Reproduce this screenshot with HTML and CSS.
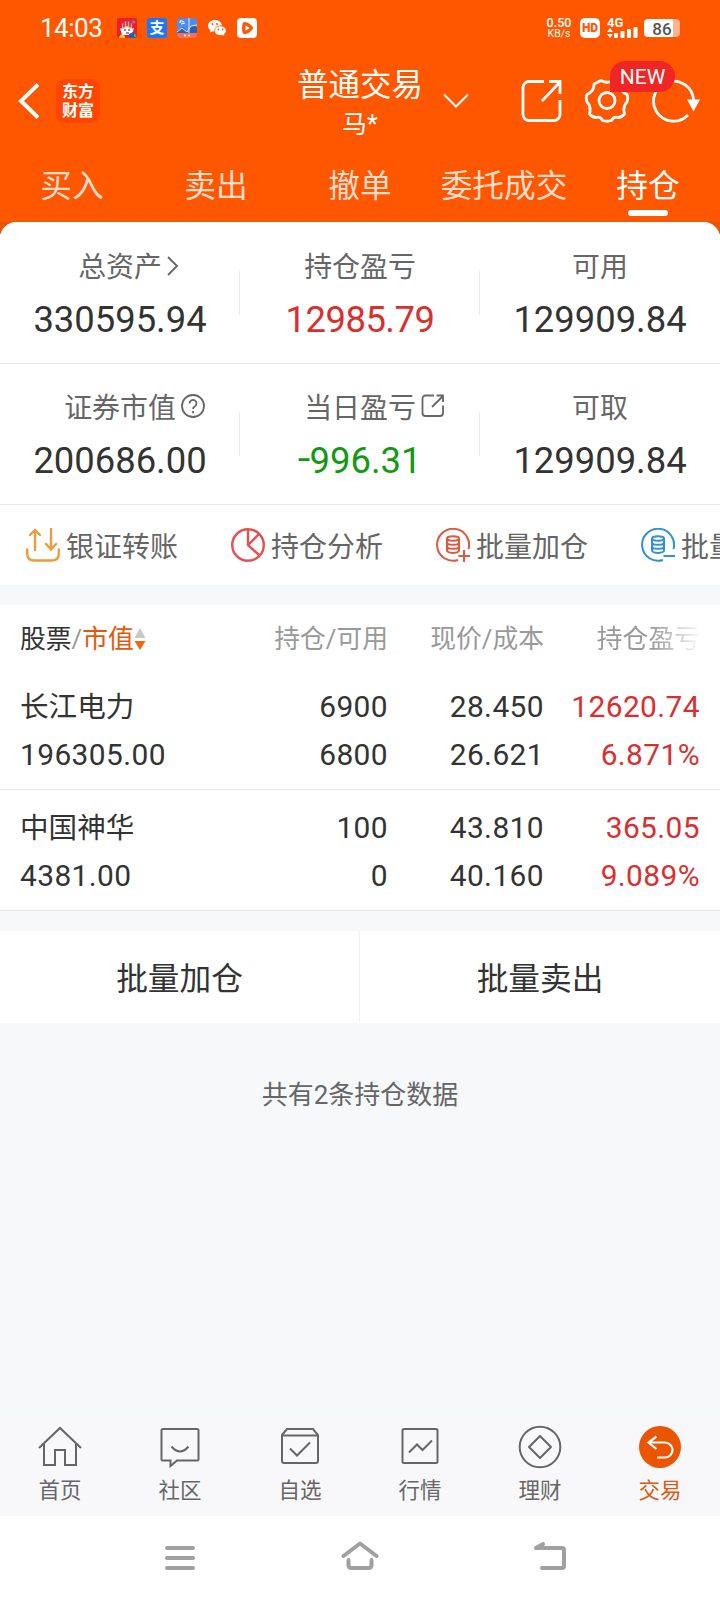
FILE: index.html
```html
<!DOCTYPE html>
<html lang="zh-CN">
<head>
    <meta charset="UTF-8">
    <meta name="viewport" content="width=device-width, initial-scale=1.0">
    <title>持仓</title>
    <link rel="stylesheet" href="styles.css">
</head>
<body>
    <header class="top">
        <div class="status">
            <span class="time">14:03</span>
            <div class="apps">
                <svg width="20" height="20" viewBox="0 0 20 20">
                    <rect width="20" height="20" rx="2" fill="#ee1c2e"/>
                    <path d="M5 11V6q5-6 10 0v5" fill="#f7a9a5"/>
                    <path d="M7 4v5M10 3v5M13 4v5" stroke="#c51e2c" stroke-width="1.4"/>
                    <path d="M3 10l4 1 3-2 3 2 4-1-2 7H5z" fill="#fff"/>
                    <path d="M7 12h2M11 12h2M9 15h3" stroke="#222" stroke-width="1.2"/>
                    <path d="M2 20q1-6 6-2v2z" fill="#ffc928"/>
                    <path d="M12 20v-4l4-2 2 2v4z" fill="#1b5fc4"/>
                    <path d="M17 16h2v3h-2z" fill="#35b26b"/>
                    <circle cx="16.500" cy="4" r="1.700" fill="#8e76b8"/>
                </svg>
                <span class="alipay">支</span>
                <svg width="20" height="20" viewBox="0 0 20 20">
                    <rect width="20" height="20" rx="4" fill="#4b8df2"/>
                    <path d="M0 13l6-4 4 4 4-6 6 2v6H0z" fill="#2862b8"/>
                    <path d="M0 15h20v1a4 4 0 0 1-4 4H4a4 4 0 0 1-4-4z" fill="#f2705c"/>
                    <path d="M0 14l5-4 5 4 4-6 6-1M12 0v15" fill="none" stroke="#dcecff" stroke-width="1"/>
                    <path d="M3 5q0-3 2-2t2 1M4 6l4-1" fill="none" stroke="#fff" stroke-width="1.2"/>
                    <path d="M7 17.500h2M11 17.500h2" stroke="#fff" stroke-width="1.500"/>
                </svg>
                <svg width="20" height="20" viewBox="0 0 20 20">
                    <path d="M8 2C4 2 1 4.500 1 7.800c0 1.900 1 3.400 2.400 4.400L3 14.500l2.500-1.300c.8.2 1.600.3 2.500.3 0-4 3-6 7-6C14.500 4 11.500 2 8 2z" fill="#fff"/>
                    <path d="M13.500 8c-3.300 0-6 2-6 4.800s2.700 4.700 6 4.700c.7 0 1.400-.1 2-.3l2 1-.4-1.800c1.300-.9 2.100-2.200 2.100-3.600C19.200 10 16.800 8 13.500 8z" fill="#fff" stroke="#ff5600" stroke-width=".7"/>
                    <g fill="#ff5600"><circle cx="5.500" cy="6" r="1"/><circle cx="10" cy="6" r="1"/><circle cx="11.500" cy="11.500" r=".9"/><circle cx="15.500" cy="11.500" r=".9"/></g>
                </svg>
                <svg width="20" height="20" viewBox="0 0 20 20">
                    <rect width="20" height="20" rx="4" fill="#fff"/>
                    <path d="M6 4.500q4-2 8.500 3 3 2.500 0 5-4.500 5-8.500 3-2-5.500 0-11z" fill="#ff5600"/>
                    <path d="M8.500 7.200v5.600l4.200-2.800z" fill="#fff"/>
                </svg>
            </div>
            <div class="signal">
                <div class="speed"><b>0.50</b><span>KB/s</span></div>
                <span class="hd">HD</span>
                <div class="net">
                    <b>4G</b>
                    <svg width="31" height="12" viewBox="0 0 31 12" fill="#fff">
                        <path d="M0 5l3-4 3 4zM0 7l3 4 3-4z"/>
                        <rect x="7" y="6" width="4" height="5" rx="1"/>
                        <rect x="13.500" y="4" width="4" height="7" rx="1"/>
                        <rect x="20" y="2" width="4" height="9" rx="1"/>
                        <rect x="26.500" y="0" width="4" height="11" rx="1"/>
                    </svg>
                </div>
                <div class="battery">86</div>
            </div>
        </div>

        <div class="titlebar">
            <div class="left">
                <svg width="22" height="36" viewBox="0 0 22 36" fill="none" stroke="#fff" stroke-width="4"><path d="M21 1.500L4 18l17 16.500"/></svg>
                <div class="logo">东方<br>财富</div>
            </div>
            <div class="title">
                <h1>普通交易</h1>
                <p>马*</p>
                <svg class="down" width="26" height="16" viewBox="0 0 26 16" fill="none" stroke="#fff" stroke-width="2"><path d="M1 1.500l12 12 12-12"/></svg>
            </div>
            <div class="tools">
                <svg width="42" height="44" viewBox="0 0 42 44" fill="none" stroke="#fff" stroke-width="2.800">
                    <path d="M24 2.500H9a6 6 0 0 0-6 6v27a6 6 0 0 0 6 6h25a6 6 0 0 0 6-6V21M22 22L39 4M29 2.500h11V15"/>
                </svg>
                <svg width="46" height="46" viewBox="0 0 46 46" fill="none" stroke="#fff" stroke-width="2.800" stroke-linejoin="round">
                    <path d="M17 2.500Q23 6 29 2.500L36 6Q35.500 13 43 16.500Q44.500 19.500 43 24Q38.500 28 40.500 36Q37.500 39.500 34 39.500Q29.500 38 27.500 42.500Q23 44 18.500 42.500Q16.500 38 12 39.500Q8.500 39.500 5.500 36Q7.500 28 3 24Q1.500 19.500 3 16.500Q10.500 13 10 6z"/>
                    <circle cx="23" cy="22.500" r="8"/>
                </svg>
                <svg width="48" height="46" viewBox="0 0 48 46">
                    <path d="M36 37A20 20 0 1 1 41.500 22" fill="none" stroke="#fff" stroke-width="2.800"/>
                    <path d="M35 21.500h13l-6.500 12z" fill="#fff"/>
                </svg>
                <span class="new">NEW</span>
            </div>
        </div>

        <nav class="tabs">
            <a>买入</a>
            <a>卖出</a>
            <a>撤单</a>
            <a>委托成交</a>
            <a class="active">持仓</a>
        </nav>
    </header>

    <div class="panel-wrap">
        <section class="panel">
            <div class="assets">
                <div class="cell">
                    <span class="label">总资产<svg class="hint arrow" width="12" height="20" viewBox="0 0 12 20" fill="none" stroke="#666" stroke-width="1.800"><path d="M1 1l9 9-9 9"/></svg></span>
                    <span class="value">330595.94</span>
                </div>
                <div class="cell">
                    <span class="label">持仓盈亏</span>
                    <span class="value red">12985.79</span>
                </div>
                <div class="cell">
                    <span class="label">可用</span>
                    <span class="value">129909.84</span>
                </div>
            </div>
            <div class="assets">
                <div class="cell">
                    <span class="label">证券市值<svg class="hint" width="24" height="24" viewBox="0 0 24 24" fill="none" stroke="#666" stroke-width="1.800"><circle cx="12" cy="12" r="11"/><path d="M8.500 9.500a3.500 3.500 0 1 1 5.500 2.800q-2 1.200-2 2.700"/><path d="M12 17v2.200"/></svg></span>
                    <span class="value">200686.00</span>
                </div>
                <div class="cell">
                    <span class="label">当日盈亏<svg class="hint" width="24" height="24" viewBox="0 0 24 24" fill="none" stroke="#666" stroke-width="1.800"><path d="M13 1.500H4.500a3 3 0 0 0-3 3V19a3 3 0 0 0 3 3H19a3 3 0 0 0 3-3v-7.500M11 13L22 2M15.500 1.500H22V8"/></svg></span>
                    <span class="value green"><i>-</i>996.31</span>
                </div>
                <div class="cell">
                    <span class="label">可取</span>
                    <span class="value">129909.84</span>
                </div>
            </div>
            <div class="actions">
                <a>
                    <svg width="34" height="34" viewBox="0 0 34 34" fill="none" stroke="#e99d3b" stroke-width="2.400" stroke-linecap="round"><path d="M9 22V2M4 7l5-5 5 5M25 1v20M20 16l5 5.500 5-5.500M1.200 21.500v4q0 7 7 7h17.600q7 0 7-7v-4"/></svg>
                    银证转账
                </a>
                <a>
                    <svg width="34" height="34" viewBox="0 0 34 34" fill="none" stroke="#e35050" stroke-width="2.400"><circle cx="17" cy="17" r="15.800"/><path d="M17 1v16l11 10M17 17L28 6"/></svg>
                    持仓分析
                </a>
                <a>
                    <svg width="34" height="34" viewBox="0 0 34 34" fill="none" stroke="#e0563f" stroke-width="2">
                        <path d="M22 32A16 16 0 1 1 32.500 21M28 22v12M22.500 28h11.500"/>
                        <ellipse cx="17" cy="10.500" rx="6" ry="2.300"/><path d="M11 10.500v12q0 2 6 2.500 6-.5 6-2.500v-12M11 14.500q0 2.300 6 2.300t6-2.300M11 18.500q0 2.300 6 2.300t6-2.300"/>
                    </svg>
                    批量加仓
                </a>
                <a>
                    <svg width="34" height="34" viewBox="0 0 34 34" fill="none" stroke="#3291d4" stroke-width="2">
                        <path d="M22 32A16 16 0 1 1 32.500 21M22.500 28h11.500"/>
                        <ellipse cx="17" cy="10.500" rx="6" ry="2.300"/><path d="M11 10.500v12q0 2 6 2.500 6-.5 6-2.500v-12M11 14.500q0 2.300 6 2.300t6-2.300M11 18.500q0 2.300 6 2.300t6-2.300"/>
                    </svg>
                    批量卖出
                </a>
            </div>
        </section>
    </div>

    <section class="stocks">
        <div class="row head">
            <div><span class="dark">股票</span>/<span class="sort">市值</span><svg width="12" height="24" viewBox="0 0 12 24"><path d="M6 1l5.500 10H.5z" fill="#c8c8c8"/><path d="M6 23L.5 14h11z" fill="#f26414"/></svg></div>
            <div>持仓/可用</div>
            <div>现价/成本</div>
            <div class="fade">持仓盈亏</div>
        </div>
        <div class="row">
            <div><b class="name">长江电力</b><br>196305.00</div>
            <div>6900<br>6800</div>
            <div>28.450<br>26.621</div>
            <div class="red">12620.74<br>6.871%</div>
        </div>
        <div class="row">
            <div><b class="name">中国神华</b><br>4381.00</div>
            <div>100<br>0</div>
            <div>43.810<br>40.160</div>
            <div class="red">365.05<br>9.089%</div>
        </div>
    </section>

    <div class="batch">
        <a>批量加仓</a>
        <a>批量卖出</a>
    </div>
    <p class="total">共有2条持仓数据</p>

    <nav class="bottom">
        <a>
            <svg width="44" height="44" viewBox="0 0 44 44"><path d="M1 23L22 3l21 20M6 19v21h11V25h10v15h11V19"/></svg>
            首页
        </a>
        <a>
            <svg width="44" height="44" viewBox="0 0 44 44"><path d="M5 4h34a1.500 1.500 0 0 1 1.500 1.500V34a1.500 1.500 0 0 1-1.500 1.500H19L12.500 41v-5.500H5A1.500 1.500 0 0 1 3.500 34V5.500A1.500 1.500 0 0 1 5 4zM13.500 21.500q8.500 10 17 0"/></svg>
            社区
        </a>
        <a>
            <svg width="44" height="44" viewBox="0 0 44 44"><path d="M4 10l5-6h26l5 6v26a2 2 0 0 1-2 2H6a2 2 0 0 1-2-2zM4 10.500h36M12 23.500l7 7L32 17.500"/></svg>
            自选
        </a>
        <a>
            <svg width="44" height="44" viewBox="0 0 44 44"><rect x="4.500" y="4" width="35" height="34" rx="1.500"/><path d="M11 27.500l8-8 5.500 5.500L34 15.500"/></svg>
            行情
        </a>
        <a>
            <svg width="44" height="44" viewBox="0 0 44 44"><circle cx="22" cy="22" r="20.300"/><path d="M22 11l11 11-11 11-11-11z" stroke-linejoin="round"/></svg>
            理财
        </a>
        <a class="on">
            <svg width="44" height="44" viewBox="0 0 44 44"><circle cx="22" cy="22" r="21" class="disc"/><path d="M18.500 11.500l-8 6L18.500 24M11 17.500h16a7.500 7.500 0 0 1 0 15h-8"/></svg>
            交易
        </a>
    </nav>

    <footer class="system">
        <svg width="60" height="40" viewBox="0 0 60 40"><path d="M17 10h26M17 20h26M17 30h26"/></svg>
        <svg width="60" height="40" viewBox="0 0 60 40"><path d="M13.500 18L30 5.500 46.500 18M18.500 22v5q0 3 3 3h17q3 0 3-3v-5"/></svg>
        <svg width="60" height="40" viewBox="0 0 60 40"><path d="M33 6l-7 4h26q2 0 2 2v16q0 2-2 2H32"/></svg>
    </footer>
</body>
</html>
```
FILE: styles.css
```css
* {
    box-sizing: border-box;
    margin: 0;
    padding: 0;
}

body {
    display: flex;
    flex-direction: column;
    width: 720px;
    height: 1600px;
    overflow: hidden;
    background-color: #f7f8fa;
    color: #333;
    font-family: Roboto, "Noto Sans CJK SC", sans-serif;
}

svg {
    display: block;
    flex-shrink: 0;
}

.red {
    color: #d9302f;
}

.green {
    color: #119a11;
}

/* header */
.top {
    height: 222px;
    background-color: #ff5600;
    color: #fff;
}

.status {
    display: flex;
    align-items: center;
    height: 56px;
    padding-left: 40px;
    padding-right: 40px;
}

.time {
    width: 77px;
    font-size: 26px;
    letter-spacing: -0.5px;
}

.apps {
    display: flex;
    gap: 10px;
}

.alipay {
    width: 20px;
    height: 20px;
    border-radius: 3px;
    background-color: #1677ff;
    font-size: 15px;
    font-weight: bold;
    line-height: 20px;
    text-align: center;
}

.signal {
    display: flex;
    align-items: center;
    margin-left: auto;
}

.speed {
    display: flex;
    flex-direction: column;
    align-items: center;
    width: 28px;
    margin-right: 7px;
    font-size: 10.5px;
    line-height: 10px;
}

.speed b {
    font-size: 12.5px;
    font-weight: 500;
    line-height: 12px;
}

.hd {
    width: 20px;
    height: 20px;
    margin-right: 7px;
    border-radius: 5px;
    background-color: #fff;
    color: #ff5600;
    font-size: 12px;
    font-weight: 900;
    line-height: 20px;
    text-align: center;
}

.net {
    width: 31px;
    margin-right: 6px;
}

.net b {
    display: block;
    height: 9px;
    font-size: 13px;
    font-weight: 700;
    line-height: 10px;
}

.battery {
    width: 36px;
    height: 18px;
    border-radius: 4px;
    background: linear-gradient(to right, #fff 29px, #ffb48c 29px);
    color: #555;
    font-size: 17px;
    font-weight: 500;
    line-height: 20px;
    text-align: center;
}

.titlebar {
    display: grid;
    grid-template-columns: 1fr auto 1fr;
    height: 90px;
}

.left {
    display: flex;
    align-items: center;
    gap: 17px;
    padding-left: 17px;
}

.logo {
    width: 44px;
    height: 44px;
    padding-top: 3px;
    border-radius: 9px;
    background-color: #ff4600;
    font-size: 16px;
    font-weight: bold;
    line-height: 19px;
    text-align: center;
}

.title {
    position: relative;
    padding-top: 9px;
    text-align: center;
}

.title h1 {
    font-size: 31.5px;
    font-weight: normal;
    line-height: 42px;
}

.title p {
    font-size: 25px;
    line-height: 36px;
}

.down {
    position: absolute;
    top: 37px;
    right: -46px;
}

.tools {
    position: relative;
    display: flex;
    align-items: center;
    justify-content: flex-end;
    gap: 22px;
    padding-right: 20px;
}

.new {
    position: absolute;
    top: 5px;
    right: 45px;
    width: 65px;
    height: 31px;
    border-radius: 16px 16px 16px 0;
    background-color: #f02525;
    font-size: 21px;
    line-height: 33px;
    text-align: center;
}

.tabs {
    display: grid;
    grid-template-columns: repeat(5, 1fr);
    height: 76px;
}

.tabs a {
    display: flex;
    flex-direction: column;
    align-items: center;
    padding-top: 20px;
    color: #ffddcc;
    font-size: 31.7px;
    line-height: 42px;
}

.tabs .active {
    color: #fff;
}

.tabs .active::after {
    content: "";
    width: 40px;
    height: 6px;
    margin-top: 2px;
    border-radius: 3px;
    background-color: #fff;
}

/* assets */
.panel-wrap {
    background: linear-gradient(#e85604 12px, #fff 12px);
}

.panel {
    overflow: hidden;
    border-radius: 16px 16px 0 0;
    background-color: #fff;
}

.assets {
    display: grid;
    grid-template-columns: repeat(3, 1fr);
    height: 142px;
    padding-top: 1px;
    border-bottom: 1px solid #e9e9e9;
}

.assets + .assets {
    height: 141px;
    padding-top: 0;
}

.cell {
    position: relative;
    display: flex;
    flex-direction: column;
    align-items: center;
    padding-top: 24px;
}

.cell + .cell::before {
    content: "";
    position: absolute;
    top: 48px;
    left: -1px;
    width: 1px;
    height: 44px;
    background-color: #e9e9e9;
}

.label {
    position: relative;
    color: #666;
    font-size: 27.9px;
    line-height: 42px;
}

.hint {
    position: absolute;
    top: 6px;
    left: calc(100% + 5px);
}

.arrow {
    top: 9px;
}

.value {
    margin-top: 10px;
    font-size: 36.4px;
    line-height: 42px;
}

.value i {
    display: inline-block;
    margin-right: 1px;
    font-style: normal;
    transform: translateY(-2px) scaleX(1.25);
}

.value.red {
    letter-spacing: -0.5px;
}

.actions {
    display: flex;
    height: 80px;
}

.actions a {
    display: flex;
    flex-shrink: 0;
    align-items: center;
    gap: 6px;
    width: 205px;
    padding-left: 26px;
    color: #666;
    font-size: 28px;
    white-space: nowrap;
}

/* stock list */
.stocks {
    margin-top: 20px;
    background-color: #fff;
}

.row {
    display: grid;
    grid-template-columns: 207px 161px 156px 156px;
    height: 121px;
    padding: 14px 19px 0 20px;
    border-bottom: 1px solid #e9e9e9;
    font-size: 29.9px;
    letter-spacing: 0.4px;
    line-height: 48px;
    text-align: right;
}

.row div:first-child {
    text-align: left;
}

.name {
    font-size: 28.6px;
    font-weight: normal;
    letter-spacing: 0;
}

.head {
    height: 64px;
    padding-top: 10px;
    border: none;
    color: #999;
    font-size: 25.8px;
    letter-spacing: 0;
}

.head div:first-child {
    display: flex;
    align-items: center;
    height: 48px;
}

.dark {
    color: #333;
}

.sort {
    color: #e2590e;
}

.fade {
    -webkit-mask-image: linear-gradient(to right, #000 108px, transparent 158px);
    mask-image: linear-gradient(to right, #000 108px, transparent 158px);
}

.batch {
    display: grid;
    grid-template-columns: 1fr 1fr;
    height: 92px;
    margin-top: 20px;
    overflow: hidden;
    background-color: #fff;
    font-size: 31.7px;
    line-height: 97px;
    text-align: center;
}

.batch a:first-child {
    border-right: 1px solid #f1f1f3;
}

.total {
    margin-top: 52px;
    color: #666;
    font-size: 26px;
    line-height: 40px;
    text-align: center;
}

/* bottom bars */
.bottom {
    display: grid;
    grid-template-columns: repeat(6, 1fr);
    height: 99px;
    margin-top: auto;
    background-color: #f8f8fb;
}

.bottom a {
    display: flex;
    flex-direction: column;
    align-items: center;
    padding-top: 8px;
    color: #666;
    font-size: 21.5px;
    line-height: 44px;
}

.bottom svg {
    fill: none;
    stroke: #666;
    stroke-width: 2;
}

.bottom .on {
    color: #dd5810;
}

.bottom .on svg {
    stroke: #fff;
    stroke-width: 2.2;
}

.bottom .disc {
    fill: #eb5500;
    stroke: none;
}

.system {
    display: flex;
    justify-content: center;
    gap: 120px;
    height: 84px;
    padding-top: 22px;
    background-color: #fff;
}

.system svg {
    fill: none;
    stroke: #a0a0a0;
    stroke-width: 4;
    stroke-linecap: round;
    stroke-linejoin: round;
}
```
